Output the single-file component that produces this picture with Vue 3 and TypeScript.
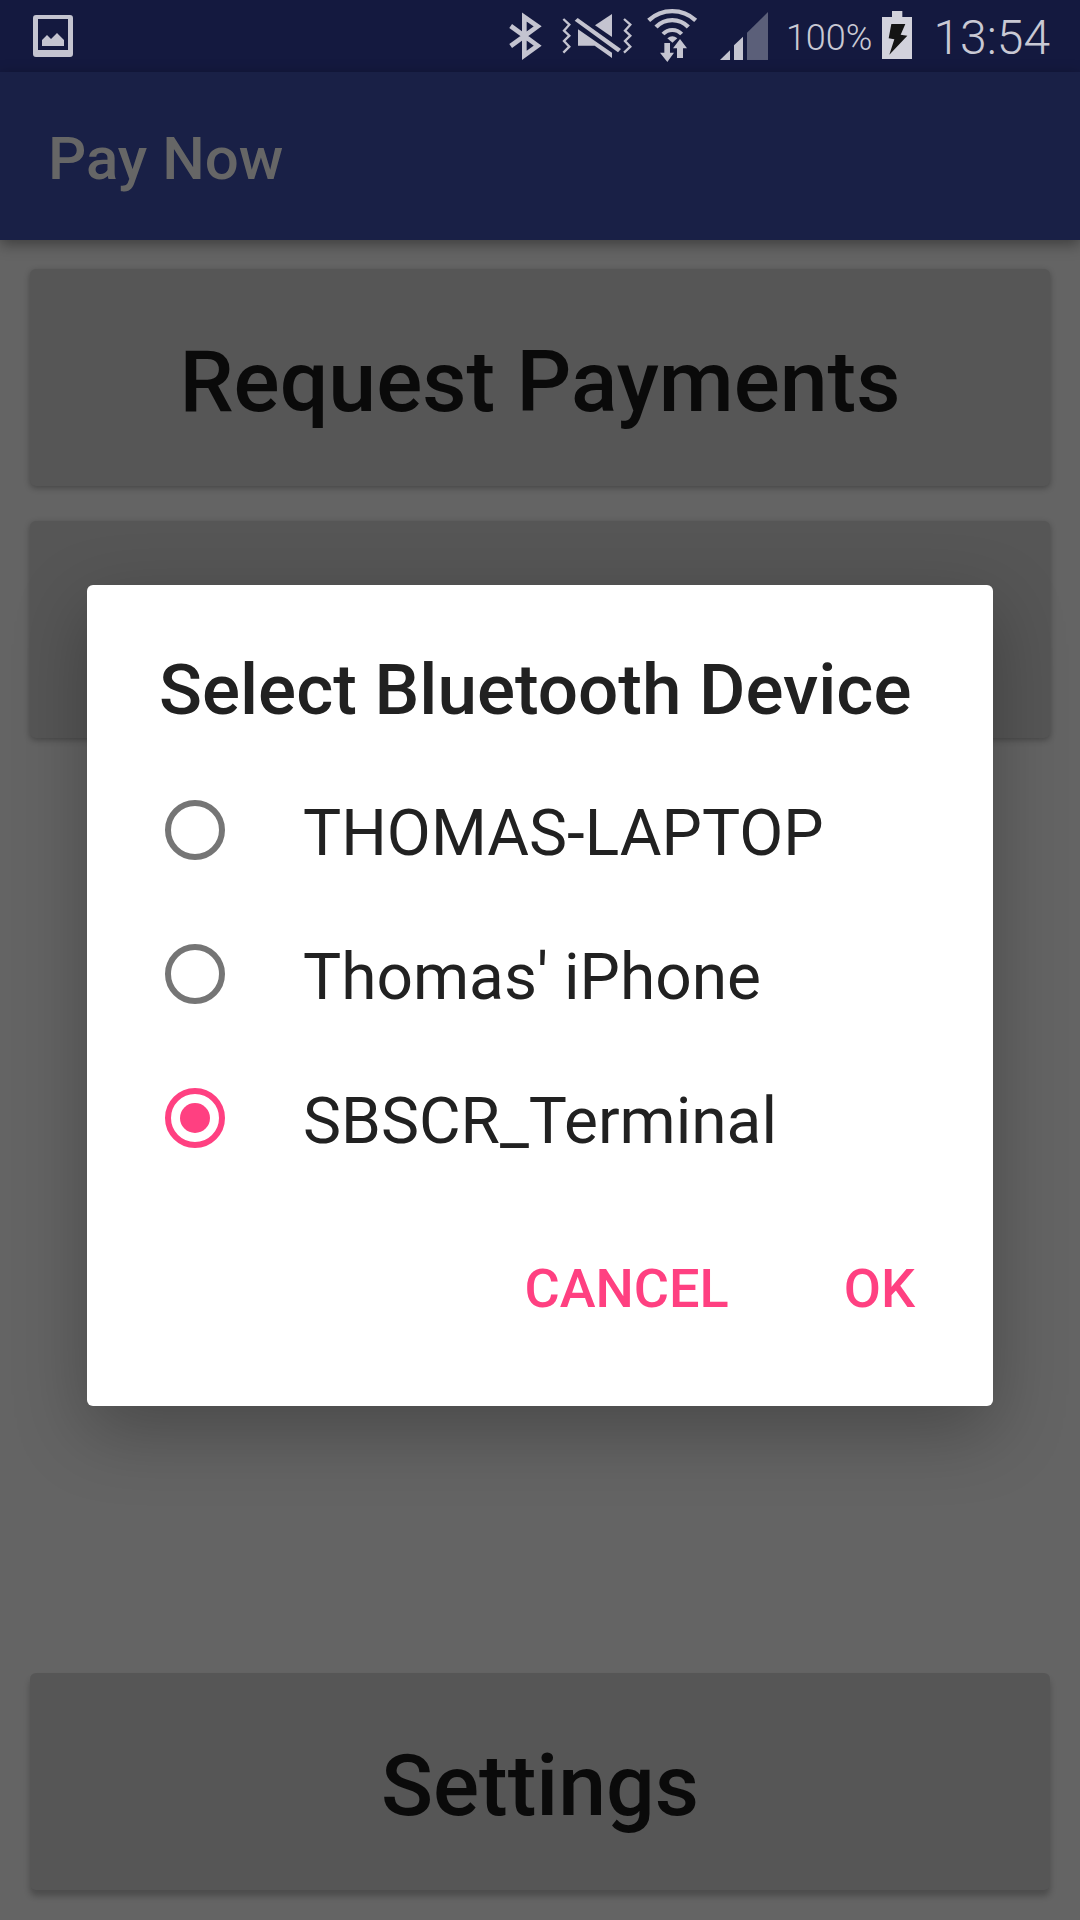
<script setup lang="ts">
import { ref } from 'vue'

interface Device {
  id: string
  name: string
}

const devices: Device[] = [
  { id: 'laptop', name: 'THOMAS-LAPTOP' },
  { id: 'iphone', name: "Thomas' iPhone" },
  { id: 'terminal', name: 'SBSCR_Terminal' },
]

const selected = ref('terminal')
</script>

<template>
  <div class="screen">
    <div class="status-bar">
      <svg class="icon" width="44" height="72" viewBox="0 0 44 72" aria-hidden="true">
        <path
          fill-rule="evenodd"
          d="M5 15H37Q40 15 40 18V54Q40 57 37 57H3Q0 57 0 54V18Q0 15 3 15ZM5 19V50H35V19Z"
        />
        <path d="M9 40L14 35L18 39L24 33L31 40V46H9Z" />
      </svg>
      <div class="status-items">
        <svg class="icon" width="44" height="72" viewBox="54 0 132 216" aria-hidden="true">
          <path class="line" stroke-width="14" d="M62 78L143 137L103 166V51L143 79L62 138" />
        </svg>
        <svg class="icon" width="75" height="72" viewBox="216 0 225 216" aria-hidden="true">
          <path class="line" stroke-width="7" d="M220 57L238 74L222 92L238 107L222 123L238 140L220 158" />
          <path class="line" stroke-width="7" d="M402 57L421 74L405 92L421 107L405 123L421 140L402 158" />
          <path d="M315 76L366 42V111Z" />
          <path d="M254 62L263 54L393 147L384 157Z" />
          <path d="M264 88L366 158V174L314 137H264Z" />
        </svg>
        <svg class="icon" width="63" height="72" viewBox="471 0 189 216" aria-hidden="true">
          <path class="line" stroke-width="13" d="M476 61A104 104 0 0 1 617 61" />
          <path class="line" stroke-width="13" d="M498 81A67 67 0 0 1 595 81" />
          <path class="line" stroke-width="12" d="M519 102A38 38 0 0 1 575 102" />
          <path d="M532 115Q547 102 562 115L547 128Z" />
          <path class="arrow" d="M523 129H540V158H552L532 186L510 158H523Z" />
          <path class="arrow" d="M561 174V145H549L570 117L591 145H579V174Z" />
        </svg>
        <svg class="icon" width="56" height="72" viewBox="690 0 168 216" aria-hidden="true">
          <path d="M690 180L720 151V180Z" />
          <path d="M732 136L759 110V180H732Z" />
          <path class="weak" d="M771 98L834 36V180H771Z" />
        </svg>
        <span class="battery-level">100%</span>
        <svg class="icon" width="41" height="72" viewBox="546 0 123 216" aria-hidden="true">
          <path class="battery" d="M546 51H576V33H607V51H636V177H546Z" />
          <path class="bolt" d="M574 72H616L602 104L622 107L568 164L583 118L566 115Z" />
        </svg>
        <span class="clock">13:54</span>
      </div>
    </div>

    <header class="app-bar">
      <h1>Pay Now</h1>
    </header>

    <main class="content">
      <button type="button" class="tile">Request Payments</button>
      <button type="button" class="tile"></button>
      <button type="button" class="tile raised">Settings</button>
    </main>

    <div class="overlay">
      <form class="dialog" role="dialog" aria-labelledby="dialog-title" @submit.prevent>
        <h2 id="dialog-title">Select Bluetooth Device</h2>
        <div class="devices">
          <label v-for="device in devices" :key="device.id" class="device">
            <input v-model="selected" type="radio" name="device" :value="device.id" />
            <span>{{ device.name }}</span>
          </label>
        </div>
        <div class="actions">
          <button type="button">CANCEL</button>
          <button type="submit">OK</button>
        </div>
      </form>
    </div>
  </div>
</template>

<style>
body {
  margin: 0;
}
</style>

<style scoped>
.screen {
  display: flex;
  flex-direction: column;
  min-height: 100vh;
  background: #646464;
  font-family: Roboto, 'Liberation Sans', sans-serif;
}

button {
  border: 0;
  font-family: inherit;
  cursor: pointer;
}

.status-bar {
  display: flex;
  align-items: center;
  justify-content: space-between;
  height: 72px;
  padding: 0 30px 0 33px;
  background: #14193f;
  color: #c9c9d4;
}

.status-items {
  display: flex;
  align-items: center;
  gap: 10px;
}

.icon {
  display: block;
  flex: none;
  fill: #c4c4d0;
}

.line {
  fill: none;
  stroke: #c4c4d0;
}

.arrow {
  stroke: #14193f;
  stroke-width: 8;
  paint-order: stroke;
}

.weak {
  fill: #5b5f79;
}

.battery {
  fill: #d2d2dc;
}

.bolt {
  fill: #141414;
}

.battery-level,
.clock {
  padding-top: 4px;
  font-weight: 300;
  line-height: 64px;
}

.battery-level {
  font-size: 36px;
}

.clock {
  font-size: 48px;
}

.app-bar {
  display: flex;
  align-items: center;
  height: 164px;
  padding: 4px 48px 0;
  background: #192046;
  box-shadow: 0 4px 14px rgba(0, 0, 0, 0.4);
}

h1 {
  margin: 0;
  color: #666;
  font-size: 60px;
  font-weight: 500;
}

.content {
  display: flex;
  flex: 1;
  flex-direction: column;
  gap: 35px;
  padding: 29px 30px 30px;
}

.tile {
  height: 217px;
  padding: 7px 0 0;
  border-radius: 6px;
  background: #565656;
  box-shadow: 0 2px 6px rgba(0, 0, 0, 0.3);
  color: #0a0a0a;
  font-size: 86px;
  font-weight: 500;
}

.raised {
  margin-top: auto;
  box-shadow: 0 6px 6px rgba(0, 0, 0, 0.24);
}

.overlay {
  position: fixed;
  inset: 70px 0 0;
  display: flex;
  align-items: center;
  justify-content: center;
  padding: 0 87px;
}

.dialog {
  flex: 1;
  padding: 63px 0 45px;
  border-radius: 6px;
  background: #fff;
  box-shadow: 0 24px 72px rgba(0, 0, 0, 0.28);
  color: #212121;
}

h2 {
  margin: 0 72px 30px;
  font-size: 71px;
  font-weight: 500;
  line-height: 84px;
  white-space: nowrap;
}

.device {
  display: flex;
  align-items: center;
  gap: 78px;
  height: 144px;
  padding: 0 78px;
  font-size: 64px;
}

.device input {
  display: grid;
  place-content: center;
  width: 60px;
  height: 60px;
  margin: 0 0 8px;
  border: 6px solid #757575;
  border-radius: 50%;
  appearance: none;
}

.device input:checked {
  border-color: #ff4081;
}

.device input:checked::before {
  width: 30px;
  height: 30px;
  border-radius: 50%;
  background: #ff4081;
  content: '';
}

.actions {
  display: flex;
  justify-content: flex-end;
  gap: 43px;
  margin-top: 23px;
  padding-right: 42px;
}

.actions button {
  height: 144px;
  padding: 0 36px;
  background: transparent;
  color: #ff4081;
  font-size: 54px;
  font-weight: 500;
}
</style>
